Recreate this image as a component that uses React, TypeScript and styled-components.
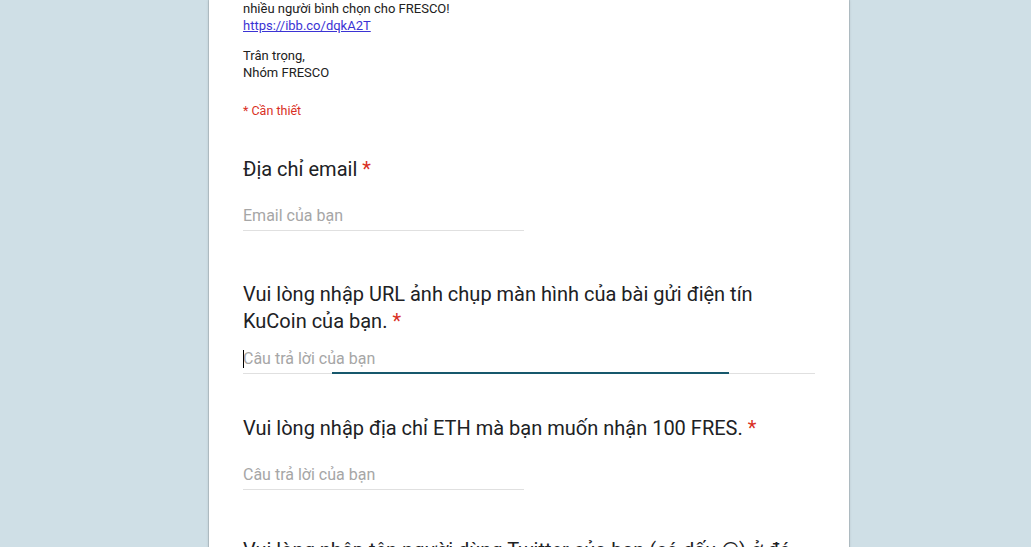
import styled, { createGlobalStyle } from "styled-components"

const GlobalStyle = createGlobalStyle`
    html, body {
        margin: 0;
        padding: 0;
        background: #cfdfe6;
        font-family: Roboto, "Noto Sans", Arial, sans-serif;
    }
    #root {
        height: 547px;
        overflow: hidden;
    }
`

const Page = styled.div`
    display: flex;
    padding-left: 209px;
`

const Card = styled.div`
    width: 640px;
    min-height: 600px;
    box-sizing: border-box;
    padding: 0 34px;
    background: #fff;
    box-shadow: 0 0 0 1px rgba(0, 0, 0, 0.1), 0 0 3px rgba(0, 0, 0, 0.18);
`

const Description = styled.div`
    font-size: 13px;
    line-height: 17px;
    color: #212121;
`

const Paragraph = styled.p`
    margin: 0;
    & + & {
        margin-top: 12.5px;
    }
`

const Link = styled.a`
    color: #3b33d4;
    text-decoration: underline;
`

const Required = styled.div`
    margin-top: 21px;
    font-size: 12.5px;
    line-height: 17px;
    color: #d93025;
`

const Question = styled.div<{ $gap: number }>`
    margin-top: ${p => p.$gap}px;
`

const Title = styled.div`
    font-size: 20px;
    line-height: 27px;
    color: #202124;
`

const Star = styled.span`
    color: #d93025;
`

const Field = styled.div<{ $wide?: boolean; $gap: number }>`
    position: relative;
    width: ${p => (p.$wide ? "572px" : "281px")};
    margin-top: ${p => p.$gap}px;
    padding: 7px 0 4px;
    border-bottom: 1px solid #e0e0e0;
    font-size: 16px;
    line-height: 20px;
    color: #a6a6a6;
`

const FocusBar = styled.span`
    position: absolute;
    left: 89px;
    bottom: -1px;
    width: 397px;
    height: 2px;
    background: #17586c;
`

const Caret = styled.span`
    position: absolute;
    left: 0;
    top: 8px;
    width: 1px;
    height: 18px;
    background: #000;
`

export default function App() {
    return (
        <>
            <GlobalStyle />
            <Page>
                <Card>
                    <Description>
                        <Paragraph>
                            nhiều người bình chọn cho FRESCO!
                            <br />
                            <Link href="#">https://ibb.co/dqkA2T</Link>
                        </Paragraph>
                        <Paragraph>
                            Trân trọng,
                            <br />
                            Nhóm FRESCO
                        </Paragraph>
                    </Description>
                    <Required>* Cần thiết</Required>

                    <Question $gap={37}>
                        <Title>Địa chỉ email <Star>*</Star></Title>
                        <Field $gap={16}>Email của bạn</Field>
                    </Question>

                    <Question $gap={50}>
                        <Title>
                            Vui lòng nhập URL ảnh chụp màn hình của bài gửi điện tín
                            <br />
                            KuCoin của bạn. <Star>*</Star>
                        </Title>
                        <Field $wide $gap={7}>
                            <Caret />
                            Câu trả lời của bạn
                            <FocusBar />
                        </Field>
                    </Question>

                    <Question $gap={41}>
                        <Title>Vui lòng nhập địa chỉ ETH mà bạn muốn nhận 100 FRES. <Star>*</Star></Title>
                        <Field $gap={16}>Câu trả lời của bạn</Field>
                    </Question>

                    <Question $gap={47}>
                        <Title>Vui lòng nhập tên người dùng Twitter của bạn (có dấu @) ở đó</Title>
                    </Question>
                </Card>
            </Page>
        </>
    )
}
